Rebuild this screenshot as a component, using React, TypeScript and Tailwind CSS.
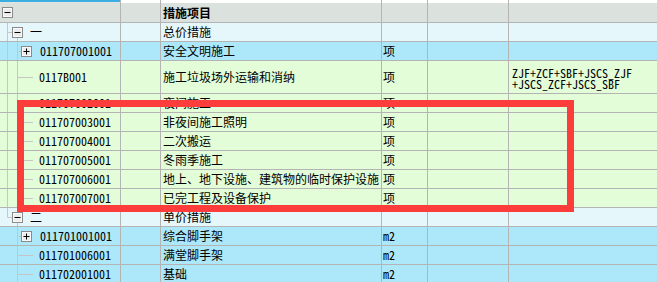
import React from "react";

type Row = {
  lvl: 1 | 2;
  code: string;
  name: string;
  unit?: string;
  bg: string;
  box?: "-" | "+";
  formula?: string;
  tall?: boolean;
  last?: boolean;
};

const rows: Row[] = [
  { lvl: 1, code: "一", name: "总价措施", bg: "bg-[#e6f7fc]", box: "-" },
  { lvl: 2, code: "011707001001", name: "安全文明施工", unit: "项", bg: "bg-[#ade8fa]", box: "+" },
  {
    lvl: 2,
    code: "0117B001",
    name: "施工垃圾场外运输和消纳",
    unit: "项",
    bg: "bg-[#e3fdd8]",
    formula: "ZJF+ZCF+SBF+JSCS_ZJF\n+JSCS_ZCF+JSCS_SBF",
    tall: true,
  },
  { lvl: 2, code: "011707002001", name: "夜间施工", unit: "项", bg: "bg-[#e3fdd8]" },
  { lvl: 2, code: "011707003001", name: "非夜间施工照明", unit: "项", bg: "bg-[#e3fdd8]" },
  { lvl: 2, code: "011707004001", name: "二次搬运", unit: "项", bg: "bg-[#e3fdd8]" },
  { lvl: 2, code: "011707005001", name: "冬雨季施工", unit: "项", bg: "bg-[#e3fdd8]" },
  { lvl: 2, code: "011707006001", name: "地上、地下设施、建筑物的临时保护设施", unit: "项", bg: "bg-[#e3fdd8]" },
  { lvl: 2, code: "011707007001", name: "已完工程及设备保护", unit: "项", bg: "bg-[#e3fdd8]" },
  { lvl: 1, code: "二", name: "单价措施", bg: "bg-[#e6f7fc]", box: "-", last: true },
  { lvl: 2, code: "011701001001", name: "综合脚手架", unit: "m2", bg: "bg-[#ade8fa]", box: "+" },
  { lvl: 2, code: "011701006001", name: "满堂脚手架", unit: "m2", bg: "bg-[#ade8fa]" },
  { lvl: 2, code: "011702001001", name: "基础", unit: "m2", bg: "bg-[#ade8fa]" },
];

const hw = "[font-feature-settings:'hwid']";

function Box({ sign }: { sign: "-" | "+" }) {
  return (
    <svg width="11" height="11" viewBox="0 0 11 11" className="block shrink-0">
      <rect x="0.5" y="0.5" width="10" height="10" fill="#ececec" stroke="#8a8a8a" />
      <rect x="1.5" y="1.5" width="8" height="8" fill="none" stroke="#ffffff" strokeOpacity="0.8" />
      <line x1="2.5" y1="5.5" x2="8.5" y2="5.5" stroke="#000" />
      {sign === "+" && <line x1="5.5" y1="2.5" x2="5.5" y2="8.5" stroke="#000" />}
    </svg>
  );
}

function TreeLines({ row, h, afterLast }: { row: Row; h: number; afterLast: boolean }) {
  const mid = Math.floor(h / 2) + 0.5;
  const c = "#c6c6c6";
  return (
    <svg width="40" height={h} className="absolute left-0 top-0" viewBox={`0 0 40 ${h}`}>
      {!afterLast && row.lvl === 2 && <line x1="7.5" y1="0" x2="7.5" y2={h} stroke={c} />}
      {row.lvl === 1 && <line x1="7.5" y1="0" x2="7.5" y2={row.last ? mid : h} stroke={c} />}
      {row.lvl === 1 && <line x1="7.5" y1={mid} x2="12" y2={mid} stroke={c} />}
      {row.lvl === 1 && <line x1="17.5" y1={mid + 5} x2="17.5" y2={h} stroke={c} />}
      {row.lvl === 2 && <line x1="17.5" y1="0" x2="17.5" y2={h} stroke={c} />}
      {row.lvl === 2 && !row.box && <line x1="18" y1={mid} x2="33" y2={mid} stroke={c} />}
      {row.lvl === 2 && row.box && <line x1="18" y1={mid} x2="21" y2={mid} stroke={c} />}
    </svg>
  );
}

export default function App() {
  let seenLast = false;
  return (
    <div
      className="relative w-[657px] h-[282px] overflow-hidden bg-white text-[12px] leading-[18px] text-black"
      style={{ fontFamily: '"Noto Sans CJK SC", "Noto Sans", sans-serif' }}
    >
      {/* top strip */}
      <div className="flex h-[3px]">
        <div className="w-[121px] border-r border-[#b4b4b4] flex flex-col">
          <div className="h-[2px] bg-[#3aaee0]" />
          <div className="h-[1px] bg-[#e4e4e4]" />
        </div>
        <div className="w-[40px] border-r border-[#b4b4b4]" />
        <div className="w-[221px] border-r border-[#b4b4b4]" />
        <div className="w-[46px] border-r border-[#b4b4b4]" />
        <div className="w-[81px] border-r border-[#b4b4b4]" />
        <div className="flex-1" />
      </div>
      {/* header */}
      <div className="flex h-[20px] bg-[#dbe1dd] border-b border-[#b4b4b4]">
        <div className="w-[121px] border-r border-[#b4b4b4] flex items-center pl-[2px]">
          <Box sign="-" />
        </div>
        <div className="w-[40px] border-r border-[#b4b4b4]" />
        <div className="w-[221px] border-r border-[#b4b4b4] pl-[2px] font-bold flex items-center">措施项目</div>
        <div className="w-[46px] border-r border-[#b4b4b4]" />
        <div className="w-[81px] border-r border-[#b4b4b4]" />
        <div className="flex-1" />
      </div>
      {rows.map((r, i) => {
        const h = r.tall ? 32 : 18;
        const afterLast = seenLast;
        if (r.last) seenLast = true;
        return (
          <div key={i} className={`flex border-b border-[#b4b4b4] ${r.bg} ${r.tall ? "h-[33px]" : "h-[19px]"}`}>
            <div className="relative w-[121px] border-r border-[#b4b4b4] flex items-center">
              <TreeLines row={r} h={h} afterLast={afterLast} />
              {r.lvl === 1 ? (
                <div className="relative flex items-center pl-[12px] gap-[7px]">
                  <Box sign={r.box!} />
                  <span>{r.code}</span>
                </div>
              ) : (
                <div className="relative flex items-center">
                  {r.box ? (
                    <div className="pl-[21px] pr-[8px]">
                      <Box sign={r.box} />
                    </div>
                  ) : (
                    <div className="w-[39px]" />
                  )}
                  <span className={hw}>{r.code}</span>
                </div>
              )}
            </div>
            <div className="w-[40px] border-r border-[#b4b4b4]" />
            <div className="w-[221px] border-r border-[#b4b4b4] pl-[2px] flex items-center whitespace-nowrap">
              {r.name}
            </div>
            <div className={`w-[46px] border-r border-[#b4b4b4] pl-[1px] flex items-center ${hw}`}>{r.unit}</div>
            <div className="w-[81px] border-r border-[#b4b4b4]" />
            <div className="flex-1 pl-[3px] flex items-center">
              {r.formula && (
                <div className={`whitespace-pre-line leading-[11px] pt-[1px] ${hw}`}>{r.formula}</div>
              )}
            </div>
          </div>
        );
      })}
      {/* red annotation rectangle */}
      <div className="absolute left-[17px] top-[100px] w-[557px] h-[112px] border-[7px] border-[#fd3c3c] pointer-events-none" />
    </div>
  );
}
